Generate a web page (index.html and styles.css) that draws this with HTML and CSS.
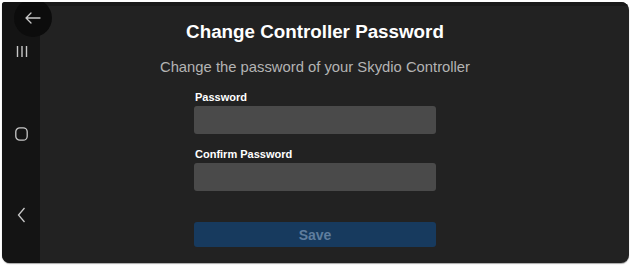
FILE: index.html
```html
<!DOCTYPE html>
<html>
<head>
<meta charset="utf-8">
<link rel="stylesheet" href="styles.css">
</head>
<body>
<div class="frame">
  <div class="back">
    <svg width="16" height="12" viewBox="0 0 16 12"><path d="M1 6H15M1 6L6 1M1 6L6 11" stroke="#c8c8c8" stroke-width="1.3" fill="none" stroke-linecap="round"/></svg>
  </div>
  <nav class="sidebar">
    <div class="nav-icon nav-recent">
      <svg width="12" height="13" viewBox="0 0 12 13"><path d="M1.5 1V12M6 1V12M10.5 1V12" stroke="#c8c8c8" stroke-width="1.4"/></svg>
    </div>
    <div class="nav-icon nav-home">
      <svg width="13" height="14" viewBox="0 0 13 14"><rect x="0.8" y="0.8" width="11.4" height="12.4" rx="4" stroke="#c8c8c8" stroke-width="1.3" fill="none"/></svg>
    </div>
    <div class="nav-icon nav-back">
      <svg width="9" height="16" viewBox="0 0 9 16"><path d="M7.5 1L1.5 8L7.5 15" stroke="#c8c8c8" stroke-width="1.3" fill="none"/></svg>
    </div>
  </nav>
  <main class="main">
    <div class="topband"></div>
    <div class="content">
      <h1 class="title">Change Controller Password</h1>
      <p class="subtitle">Change the password of your Skydio Controller</p>
      <form class="form">
        <label class="label">Password</label>
        <div class="input"></div>
        <label class="label label-second">Confirm Password</label>
        <div class="input"></div>
        <div class="save">Save</div>
      </form>
    </div>
  </main>
</div>
</body>
</html>
```
FILE: styles.css
```css
* { box-sizing: border-box; }
html, body { margin: 0; padding: 0; }
body {
  background: #ffffff;
  width: 632px;
  height: 267px;
  overflow: hidden;
  font-family: "Liberation Sans", Arial, sans-serif;
}
.frame {
  position: relative;
  margin: 2px 3px 0 2px;
  height: 261px;
  display: flex;
  background: #222222;
  border-radius: 3px 8px 8px 8px;
  overflow: hidden;
  box-shadow: 0 1px 1px rgba(0,0,0,0.35);
}
.back {
  position: absolute;
  left: 12px;
  top: -3px;
  width: 38px;
  height: 38px;
  border-radius: 50%;
  background: #0c0c0c;
  display: flex;
  align-items: center;
  justify-content: center;
  z-index: 2;
}
.sidebar {
  width: 38px;
  flex: none;
  background: #141414;
  display: flex;
  flex-direction: column;
  align-items: flex-start;
}
.nav-icon { display: flex; padding-left: 13px; }
.nav-recent { margin-top: 43px; padding-left: 14px; }
.nav-home { margin-top: 69px; }
.nav-back { margin-top: 66px; padding-left: 15px; }
.main {
  flex: 1;
  display: flex;
  flex-direction: column;
}
.topband {
  height: 4px;
  background: #1a1a1a;
}
.content {
  padding-right: 39px;
  display: flex;
  flex-direction: column;
  align-items: center;
}
.title {
  margin: 15px 0 0;
  font-size: 18.8px;
  font-weight: 700;
  color: #ffffff;
  line-height: 22px;
}
.subtitle {
  margin: 15px 0 0;
  font-size: 14.8px;
  color: #b4b4b4;
  line-height: 18px;
}
.form {
  margin: 15px 0 0;
  width: 242px;
  display: flex;
  flex-direction: column;
}
.label {
  font-size: 11px;
  font-weight: 700;
  color: #ffffff;
  line-height: 13px;
  padding-left: 1px;
  margin-bottom: 2px;
}
.label-second { margin-top: 14px; }
.input {
  height: 28px;
  background: #4a4a4a;
  border-radius: 3px;
}
.save {
  margin-top: 31px;
  height: 25px;
  background: #173a5e;
  border-radius: 3px;
  color: #5f7d9d;
  font-size: 14px;
  font-weight: 700;
  display: flex;
  align-items: center;
  justify-content: center;
}
```
